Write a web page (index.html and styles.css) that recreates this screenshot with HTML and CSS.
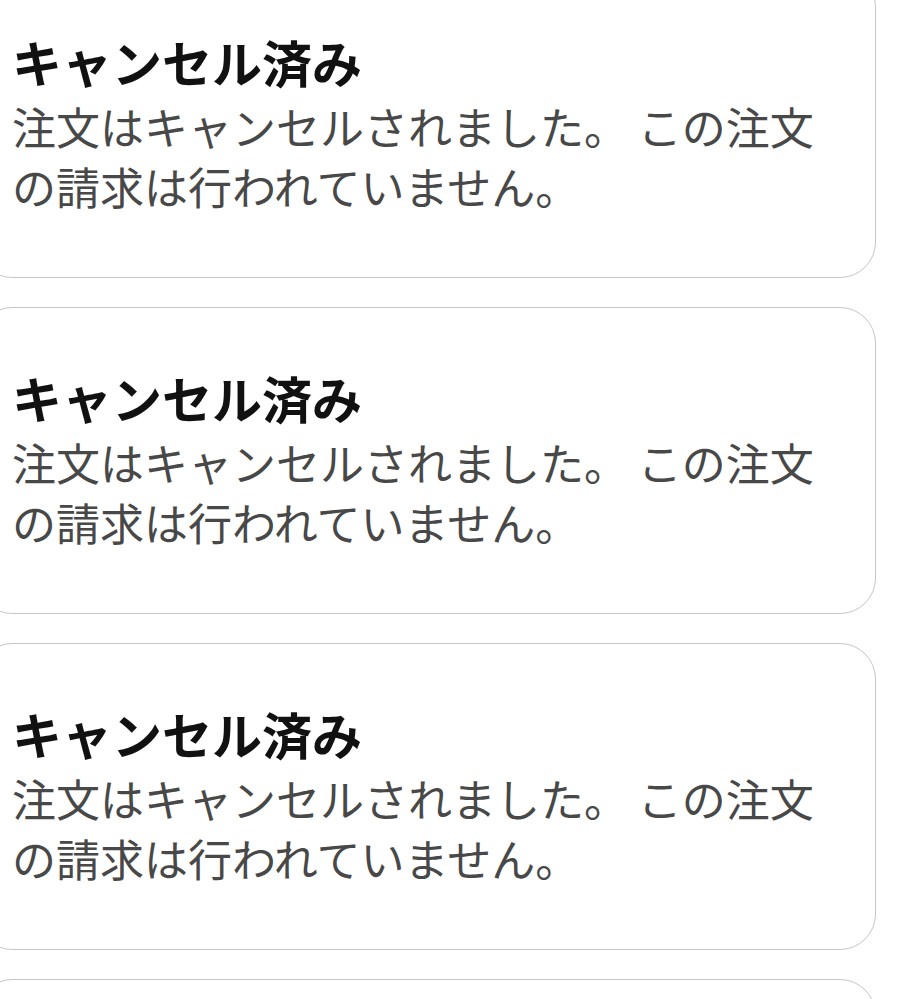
FILE: index.html
```html
<!DOCTYPE html>
<html lang="ja">
<head>
  <meta charset="UTF-8">
  <title>注文履歴</title>
  <meta name="viewport" content="width=device-width, initial-scale=1">
  <link rel="stylesheet" href="styles.css">
</head>
<body>

  <!-- キャンセル済みの注文一覧 -->
  <div class="order-list">
    <div class="order-card">
      <div class="status">キャンセル済み</div>
      <p class="note">注文はキャンセルされました。 この注文の請求は行われていません。</p>
    </div>
    <div class="order-card">
      <div class="status">キャンセル済み</div>
      <p class="note">注文はキャンセルされました。 この注文の請求は行われていません。</p>
    </div>
    <div class="order-card">
      <div class="status">キャンセル済み</div>
      <p class="note">注文はキャンセルされました。 この注文の請求は行われていません。</p>
    </div>
    <!-- 次のカードは画面下端で切れている -->
    <div class="order-card order-card-next"></div>
  </div>

</body>
</html>
```

FILE: styles.css
```css
body {
  margin: 0;
  background: #fff;
  font-family: "Noto Sans CJK JP", "Noto Sans", sans-serif;
  overflow: hidden;
}
.order-list {
  display: flex;
  flex-direction: column;
  gap: 29px;
  width: 900px;
  margin: -29px 0 0 -24px;
}
.order-card {
  background: #fff;
  border: 1px solid #c6c6c6;
  border-radius: 36px;
  padding: 54px 45px 61px 35px;
}
.order-card-next {
  height: 190px;
}
.status {
  font-size: 50px;
  line-height: 70px;
  font-weight: bold;
  color: #111;
}
.note {
  margin: 0;
  font-size: 44px;
  line-height: 60px;
  color: #484848;
}
```
